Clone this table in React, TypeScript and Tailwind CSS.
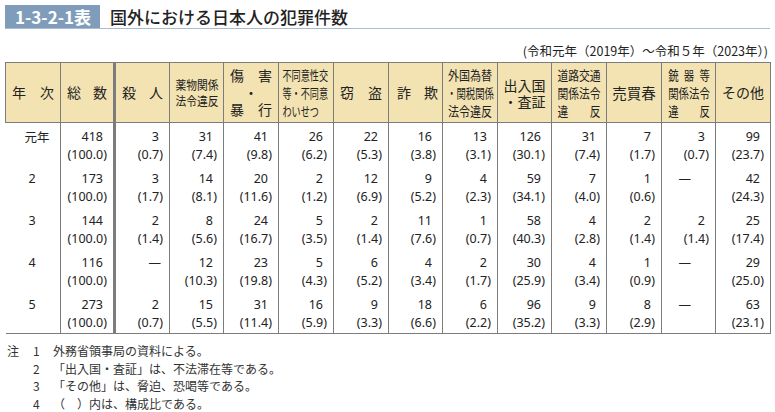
const jp = { fontFamily: '"Noto Sans CJK JP", "Noto Sans", sans-serif' };

type Cell = [string, string] | null;

const rows: { year: string; cells: Cell[] }[] = [
  {
    year: "元年",
    cells: [
      ["418", "(100.0)"], ["3", "(0.7)"], ["31", "(7.4)"], ["41", "(9.8)"], ["26", "(6.2)"],
      ["22", "(5.3)"], ["16", "(3.8)"], ["13", "(3.1)"], ["126", "(30.1)"], ["31", "(7.4)"],
      ["7", "(1.7)"], ["3", "(0.7)"], ["99", "(23.7)"],
    ],
  },
  {
    year: "2",
    cells: [
      ["173", "(100.0)"], ["3", "(1.7)"], ["14", "(8.1)"], ["20", "(11.6)"], ["2", "(1.2)"],
      ["12", "(6.9)"], ["9", "(5.2)"], ["4", "(2.3)"], ["59", "(34.1)"], ["7", "(4.0)"],
      ["1", "(0.6)"], null, ["42", "(24.3)"],
    ],
  },
  {
    year: "3",
    cells: [
      ["144", "(100.0)"], ["2", "(1.4)"], ["8", "(5.6)"], ["24", "(16.7)"], ["5", "(3.5)"],
      ["2", "(1.4)"], ["11", "(7.6)"], ["1", "(0.7)"], ["58", "(40.3)"], ["4", "(2.8)"],
      ["2", "(1.4)"], ["2", "(1.4)"], ["25", "(17.4)"],
    ],
  },
  {
    year: "4",
    cells: [
      ["116", "(100.0)"], null, ["12", "(10.3)"], ["23", "(19.8)"], ["5", "(4.3)"],
      ["6", "(5.2)"], ["4", "(3.4)"], ["2", "(1.7)"], ["30", "(25.9)"], ["4", "(3.4)"],
      ["1", "(0.9)"], null, ["29", "(25.0)"],
    ],
  },
  {
    year: "5",
    cells: [
      ["273", "(100.0)"], ["2", "(0.7)"], ["15", "(5.5)"], ["31", "(11.4)"], ["16", "(5.9)"],
      ["9", "(3.3)"], ["18", "(6.6)"], ["6", "(2.2)"], ["96", "(35.2)"], ["9", "(3.3)"],
      ["8", "(2.9)"], null, ["63", "(23.1)"],
    ],
  },
];

const widths = [55, 54, 55, 54, 55, 55, 55, 54, 55, 54, 55, 55, 54, 55];

const th = "border border-[#7c7c7c] bg-[#f3e3b2] p-0 font-normal align-middle h-[60px] text-[#222]";

const Pair = ({ a, b }: { a: string; b: string }) => (
  <div className="flex justify-between px-[6px] text-[14px] leading-[17px]">
    <span>{a}</span>
    <span>{b}</span>
  </div>
);

export default function App() {
  return (
    <div className="w-[775px] h-[412px] bg-white text-[#222] px-[5px] pt-[5px]" style={jp}>
      {/* title */}
      <div className="flex items-stretch border-b border-[#a9bccf]">
        <div className="w-[95px] h-[23px] bg-[#7f9dba] text-white font-bold text-[17px] leading-[23px] pl-[10px]">
          1-3-2-1表
        </div>
        <div className="ml-[10px] text-[17px] leading-[23px] font-medium">国外における日本人の犯罪件数</div>
      </div>

      <div className="mt-[14px] pr-[2px] text-right text-[12.5px] leading-[16px]">
        (令和元年（2019年）～令和５年（2023年）)
      </div>

      <table className="mt-[3px] table-fixed border-collapse w-[765px]">
        <colgroup>
          {widths.map((w, i) => (
            <col key={i} style={{ width: w }} />
          ))}
        </colgroup>
        <thead>
          <tr>
            <th className={th}>
              <Pair a="年" b="次" />
            </th>
            <th className={`${th} border-r-[3px] border-r-double`}>
              <Pair a="総" b="数" />
            </th>
            <th className={th}>
              <Pair a="殺" b="人" />
            </th>
            <th className={th}>
              <div className="flex justify-center">
                <div className="w-[50px] text-[12.5px] leading-[16px] [transform:scaleX(0.86)]">
                  薬物関係
                  <br />
                  法令違反
                </div>
              </div>
            </th>
            <th className={th}>
              <Pair a="傷" b="害" />
              <div className="text-[14px] leading-[17px]">・</div>
              <Pair a="暴" b="行" />
            </th>
            <th className={th}>
              <div className="pl-[5px] text-left text-[13px] leading-[18px] whitespace-nowrap origin-left [transform:scaleX(0.7)]">
                <div>不同意性交</div>
                <div>等・不同意</div>
                <div>わいせつ</div>
              </div>
            </th>
            <th className={th}>
              <Pair a="窃" b="盗" />
            </th>
            <th className={th}>
              <div className="flex justify-between pl-[8px] pr-[4px] text-[14px] leading-[17px]">
                <span>詐</span>
                <span>欺</span>
              </div>
            </th>
            <th className={th}>
              <div className="flex flex-col items-center text-[13px] leading-[18px] whitespace-nowrap">
                <div className="[transform:scaleX(0.85)]">外国為替</div>
                <div className="[transform:scaleX(0.72)]">・関税関係</div>
                <div className="[transform:scaleX(0.85)]">法令違反</div>
              </div>
            </th>
            <th className={th}>
              <div className="text-[14px] leading-[16px]">
                出入国
                <br />
                ・査証
              </div>
            </th>
            <th className={th}>
              <div className="flex justify-center">
                <div className="w-[52px] text-[13px] leading-[18px] [transform:scaleX(0.83)]">
                  <div>道路交通</div>
                  <div>関係法令</div>
                  <div className="flex justify-between">
                    <span>違</span>
                    <span>反</span>
                  </div>
                </div>
              </div>
            </th>
            <th className={th}>
              <div className="text-[14.5px]">売買春</div>
            </th>
            <th className={th}>
              <div className="flex justify-center">
                <div className="w-[52px] text-[13px] leading-[18px] [transform:scaleX(0.8)]">
                  <div className="flex justify-between">
                    <span>銃</span>
                    <span>器</span>
                    <span>等</span>
                  </div>
                  <div>関係法令</div>
                  <div className="flex justify-between">
                    <span>違</span>
                    <span>反</span>
                  </div>
                </div>
              </div>
            </th>
            <th className={th}>
              <div className="text-[14px]">その他</div>
            </th>
          </tr>
        </thead>
        <tbody className="text-[12.5px]" style={{ fontFamily: '"Noto Sans", "Noto Sans CJK JP", sans-serif' }}>
          {rows.map((r, ri) => {
            const last = ri === rows.length - 1;
            const bb = last ? "border-b border-b-[#7c7c7c]" : "";
            return (
              <tr key={ri}>
                <td className={`p-0 align-top border-r border-[#7c7c7c] ${bb}`}>
                  <div className="pt-[5px] pb-[1px] leading-[18px] h-[42px]">
                    {r.year === "元年" ? (
                      <span className="pl-[19px]" style={jp}>
                        元年
                      </span>
                    ) : (
                      <span className="pl-[23px]">{r.year}</span>
                    )}
                  </div>
                </td>
                {r.cells.map((c, ci) => (
                  <td
                    key={ci}
                    className={`p-0 align-top border-[#7c7c7c] ${bb} ${
                      ci === 0 ? "border-r-[3px] border-r-double" : "border-r"
                    }`}
                  >
                    <div className="pt-[5px] pb-[1px] leading-[18px] h-[42px] flex flex-col items-end">
                      {c ? (
                        <>
                          <span className="pr-[10px]">{c[0]}</span>
                          <span className="pr-[6px]">{c[1]}</span>
                        </>
                      ) : ci === 1 ? (
                        <span className="pr-[8px]">—</span>
                      ) : (
                        <span className="pr-[24px]">—</span>
                      )}
                    </div>
                  </td>
                ))}
              </tr>
            );
          })}
        </tbody>
      </table>

      <div className="mt-[8px] pl-[2px] text-[12px] leading-[17.5px] text-[#333] grid grid-cols-[26px_20px_1fr]">
        <span>注</span>
        <span>1</span>
        <span>外務省領事局の資料による。</span>
        <span />
        <span>2</span>
        <span>「出入国・査証」は、不法滞在等である。</span>
        <span />
        <span>3</span>
        <span>「その他」は、脅迫、恐喝等である。</span>
        <span />
        <span>4</span>
        <span>（　）内は、構成比である。</span>
      </div>
    </div>
  );
}
